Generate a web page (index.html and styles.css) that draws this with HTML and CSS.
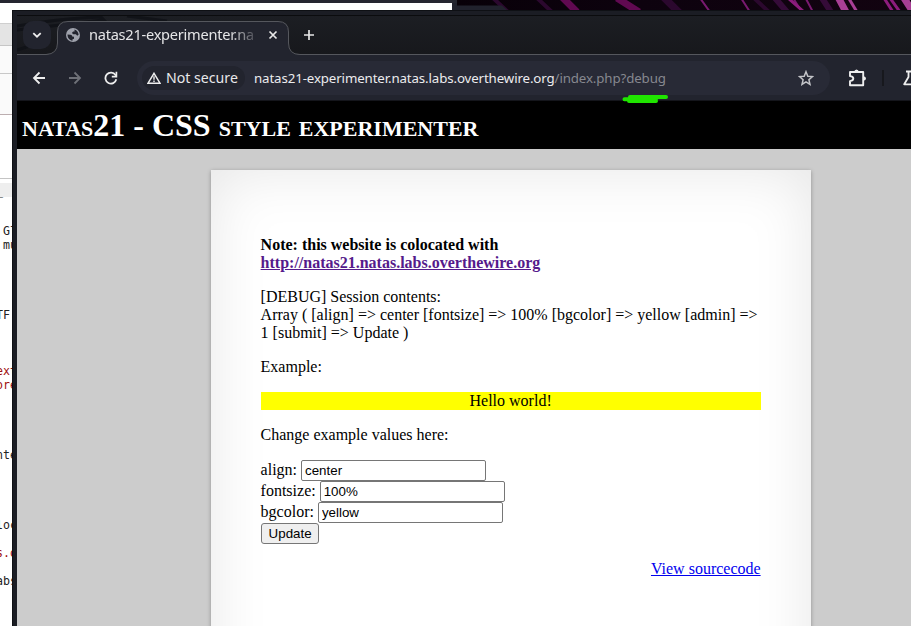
FILE: index.html
```
<!DOCTYPE html>
<html lang="en">
<head>
<meta charset="utf-8">
<title>natas21-experimenter</title>
<link rel="stylesheet" href="styles.css">
</head>
<body>
<div class="desktop">
  <svg class="wallpaper" width="455" height="10" viewBox="0 0 455 10">
    <defs><linearGradient id="fade"><stop offset="0" stop-color="#080008"/><stop offset=".4" stop-color="#0d020e"/><stop offset="1" stop-color="#120310"/></linearGradient></defs>
    <path fill="url(#fade)" d="M0 0h455v10H0z"/>
    <g fill="none" stroke-width="2">
      <path stroke="#2b082e" d="M36-2l15 14M80-2l15 14M210-2l14 14M205-2l14 14M297-2l15 14" stroke-width="4"/>
      <path stroke="#350b38" stroke-width="6" d="M318-2l12 14M365-2l9 14"/>
      <path stroke="#610951" stroke-width="7" d="M105-3l15 15M160-2l22 14"/>
      <path stroke="#791a70" d="M243-2l10 14M284-2l9 14M336-2l9 14M348-3l8 15"/>
      <path stroke="#8d1c7d" stroke-width="3" d="M331-2l16 14M427-2l9 14M433-2l10 14"/>
      <path stroke="#a83f95" stroke-width="7" d="M381-3l8 15M447-2l9 14"/>
      <path stroke="#a83f95" stroke-width="3" d="M391-3l9 15"/>
    </g>
    <path fill="#21222d" d="M0 5.5h45l5 4.500H0z"/>
  </svg>
  <div class="editor">
    <div class="editor-top"></div>
    <div class="strip blank"></div>
    <div class="strip tabs"></div>
    <div class="strip tools"></div>
    <div class="strip filter"></div>
    <div class="strip gap"></div>
    <div class="strip heading"></div>
<pre class="code">‾

 Gl
 mu




TF



<b>ext</b>
<b>ore</b>




nte




loc

<b>s.o</b>

abs</pre>
  </div>
  <div class="browser">
    <div class="tabstrip">
      <svg class="sheen" width="270" height="39" viewBox="0 0 270 39"><path d="M0 10Q45 2 84 1l6 6M0 14L86 4M0 34L25 26M110 0l40 5" fill="none" stroke="#111318" stroke-width="3"/></svg>
      <div class="search"><svg width="12" height="12" viewBox="0 0 12 12"><path d="M2.3 4.200L6 7.700l3.700-3.500" fill="none" stroke="#eee" stroke-width="1.800"/></svg></div>
      <div class="tab">
        <svg class="outline" width="254" height="40" viewBox="0 0 254 40"><path d="M-6 39.500H0Q11.500 39 11.500 28V17Q11.500 6.500 22 6.500H232Q242.500 6.500 242.500 17V28Q242.500 39.500 254 39.500V40H-6z" fill="#22242e"/><path d="M-6 39.500H0Q11.500 39 11.500 28V17Q11.500 6.500 22 6.500H232Q242.500 6.500 242.500 17V28Q242.500 39.500 254 39.500" fill="none" stroke="#55575d"/></svg>
        <svg class="globe" width="14" height="14" viewBox="0 0 14 14"><circle cx="7" cy="7" r="7" fill="#9fa2ac"/><path fill="#22242e" d="M1.500 6.500l3 .2c1 .2 1.700.8 1.700 1.700l1.800.3v2l-1.500.5v1.500C3.600 12.300 1.500 10 1.500 6.500zM8.500 1.600c2.400.7 4 2.700 4.100 5.200l-1.400 1-1.300-1.500H7.300L5.900 5l1.200-1.400h1.400z"/></svg>
        <span class="tab-title">natas21-experimenter.na</span>
        <svg class="close" width="10" height="10" viewBox="0 0 10 10"><path d="M1.500 1.500l7 7m0-7l-7 7" stroke="#e8e8e8" stroke-width="1.700"/></svg>
      </div>
      <svg class="plus" width="12" height="12" viewBox="0 0 12 12"><path d="M1 6h10M6 1v10" stroke="#e6e6e6" stroke-width="1.700"/></svg>
    </div>
    <div class="toolbar">
      <svg class="nav back" width="14" height="14" viewBox="0 0 14 14"><path d="M13 7H2m5.500-5.500L2 7l5.500 5.500" fill="none" stroke="#eee" stroke-width="1.800"/></svg>
      <svg class="nav forward" width="14" height="14" viewBox="0 0 14 14"><path d="M1 7h11M6.500 1.500L12 7l-5.500 5.500" fill="none" stroke="#6f7178" stroke-width="1.800"/></svg>
      <svg class="nav reload" width="14" height="14" viewBox="0 0 14 14"><path d="M12.300 8.300A5.500 5.500 0 1 1 11.500 4L12.400 5" fill="none" stroke="#eee" stroke-width="1.800"/><path d="M12.400.8v4.800H7.800" fill="none" stroke="#eee" stroke-width="1.700"/></svg>
      <div class="omnibox">
        <div class="security"><svg width="14" height="12" viewBox="0 0 14 12"><path d="M7 1.300L13 11.200H1z" fill="none" stroke="#eee" stroke-width="1.500"/><path d="M7 4.300v3.400M7 8.500V10" stroke="#eee" stroke-width="1.400"/></svg><span>Not secure</span></div>
        <span class="url">natas21-experimenter.natas.labs.overthewire.org<i>/index.php?debug</i></span>
        <svg class="star" width="16" height="16" viewBox="0 0 16 16"><path d="M8 1.700l1.800 4.500 4.700.4-3.600 3.100 1.100 4.700L8 11.900l-4 2.500 1.100-4.700-3.600-3.100 4.700-.4z" fill="none" stroke="#c3c4c8" stroke-width="1.500"/></svg>
      </div>
      <svg class="puzzle" width="18" height="18" viewBox="0 0 18 18"><path d="M2 3h13.200v13.200H2v-4.100Q5.300 11.800 5.300 9.600T2 7.100z" fill="none" stroke="#eee" stroke-width="1.900" stroke-linejoin="round"/><path d="M6.300 3Q6.300.4 8.500.4T10.700 3M15.500 7.300Q18 7.500 18 9.500T15.500 11.700" fill="#eee"/></svg>
      <i class="divider"></i>
      <svg class="flask" width="16" height="16" viewBox="0 0 16 16"><path d="M3 1.500h10M5.500 2v5L1.200 14.300h13.600L10.500 7V2" fill="none" stroke="#eee" stroke-width="1.800" stroke-linejoin="round"/></svg>
    </div>
    <main class="page">
      <h1>natas21 - CSS style experimenter</h1>
      <div class="content">
        <p><b>Note: this website is colocated with <a class="visited" href="#">http://natas21.natas.labs.overthewire.org</a></b></p>
        <p>[DEBUG] Session contents:<br>Array ( [align] =&gt; center [fontsize] =&gt; 100% [bgcolor] =&gt; yellow [admin] =&gt; 1 [submit] =&gt; Update )</p>
        <p>Example:</p>
        <div class="example">Hello world!</div>
        <p>Change example values here:</p>
        <form>
          <label><span>align:</span> <input value="center"></label>
          <label><span>fontsize:</span> <input value="100%"></label>
          <label><span>bgcolor:</span> <input value="yellow"></label>
          <button type="button">Update</button>
        </form>
        <div class="source"><a href="#">View sourcecode</a></div>
      </div>
    </main>
  </div>
  <svg class="marker" width="48" height="10" viewBox="0 0 48 10"><path d="M3.500 5.200H14M9 3H45M8 7H35M9 5H35" fill="none" stroke="#20e500" stroke-width="4" stroke-linecap="round"/></svg>
</div>
</body>
</html>
```

FILE: styles.css
```
* { box-sizing: border-box; }
body { margin: 0; }
svg { display: block; flex: none; }
.desktop { position: relative; width: 911px; height: 626px; overflow: hidden; background: #21222d; }
.wallpaper { position: absolute; left: 457px; top: 0; }

.editor { width: 452px; height: 626px; background: #fff; }
.editor-top { width: 457px; height: 3px; background: #252630; }
.blank { height: 20px; }
.tabs { height: 23px; background: #e4e4e4; border-top: 1px solid #cfcfcf; border-bottom: 1px solid #c6c6c6; }
.tools { height: 28px; background: #fafafa; border-bottom: 1px solid #c8c8c8; }
.filter { height: 41px; background: #fafafa; border-bottom: 1px solid #bcaeb0; }
.gap { height: 64px; border-bottom: 1px solid #c4c4c4; margin-bottom: 4px; }
.heading { height: 14px; background: #eee; }
.code { margin: -1px 0 0 -4px; font: 11.600px/14px "DejaVu Sans Mono", monospace; color: #222; }
.code b { font-weight: 400; color: #a01010; }

.browser { position: absolute; left: 12px; top: 10px; width: 1000px; height: 700px; border: 5px solid #1b1d24; outline: 1px solid #0e1014; outline-offset: -1px; background: #ccc; }
.tabstrip { position: relative; display: flex; height: 40px; background: linear-gradient(#1c1e23, #17181c); border-top: 1px solid #0b0c0e; border-bottom: 1px solid #55575d; }
.sheen { position: absolute; left: 0; top: 0; }
.search { position: relative; width: 28px; height: 28px; margin: 5px 0 0 6px; border-radius: 10px; background: #22242e; display: grid; place-items: center; }
.tab { position: relative; display: flex; align-items: center; width: 254px; height: 38px; margin-left: -5px; padding: 0 0 0 20px; }
.outline { position: absolute; left: 0; top: -1px; }
.globe, .close, .tab-title { position: relative; }
.tab-title { width: 167px; margin-left: 9px; overflow: hidden; white-space: nowrap; font: 14.600px/20px "Noto Sans", sans-serif; letter-spacing: -.26px; margin-top: -2px; color: #e5e5e7; -webkit-mask-image: linear-gradient(90deg, #000 84%, rgba(0,0,0,.15)); mask-image: linear-gradient(90deg, #000 84%, rgba(0,0,0,.15)); }
.close { margin-left: 12px; }
.plus { margin: 13px 0 0 3px; }

.toolbar { display: flex; align-items: center; height: 46px; background: #22242e; border-bottom: 1px solid #14151b; }
.back { margin-left: 15px; }
.forward { margin-left: 22px; }
.reload { margin-left: 22px; }
.omnibox { display: flex; align-items: center; width: 693px; height: 34px; margin-left: 19px; border-radius: 17px; background: #282a36; }
.security { display: flex; align-items: center; width: 103px; height: 24px; margin-left: 5px; padding-left: 5px; gap: 5px; border-radius: 12px; background: #22242e; font: 14.150px "Noto Sans", sans-serif; color: #e8e8ea; white-space: nowrap; }
.url { margin-left: 9px; width: 543px; font: 13.300px "Noto Sans", sans-serif; letter-spacing: -.125px; color: #ececee; white-space: nowrap; }
.url i { font-style: normal; color: #86888f; }
.star { margin-left: 1px; }
.puzzle { margin-left: 18px; }
.divider { width: 2px; height: 16px; margin-left: 16px; background: #17181d; }
.flask { margin-left: 19px; }

.page { height: 600px; background: #ccc; font: 16px/18px "Liberation Serif", serif; color: #000; }
h1 { margin: 0; height: 48px; padding-left: 5px; background: #000; color: #fff; font: small-caps bold 32px/48px "Liberation Serif", serif; }
.content { width: 600px; height: 600px; margin: 21px 0 0 194px; padding: 66px 50.400px 0 49.600px; background: #fff; box-shadow: 0 1px 4px rgba(0,0,0,.3), inset 0 0 60px rgba(0,0,0,.1); }
p { margin: 0 0 16px; }
a { color: #0000ee; }
.visited { color: #551a8b; }
.example { background: #ff0; text-align: center; margin-bottom: 16px; }
label { display: flex; align-items: center; gap: 4px; height: 21px; }
label span { padding-bottom: 2px; }
input { width: 185px; height: 21px; padding: 1px 2px 1px 3px; border: 1px solid #767676; border-radius: 2px; font: 13.333px "Liberation Sans", sans-serif; color: #000; background: #fff; }
button { display: block; width: 58px; height: 21px; padding: 0 0 0 1px; border: 1px solid #767676; border-radius: 3px; background: #efefef; font: 13.333px "Liberation Sans", sans-serif; color: #000; }
.source { margin-top: 16px; text-align: right; }
.marker { position: absolute; left: 621px; top: 94px; }
```
